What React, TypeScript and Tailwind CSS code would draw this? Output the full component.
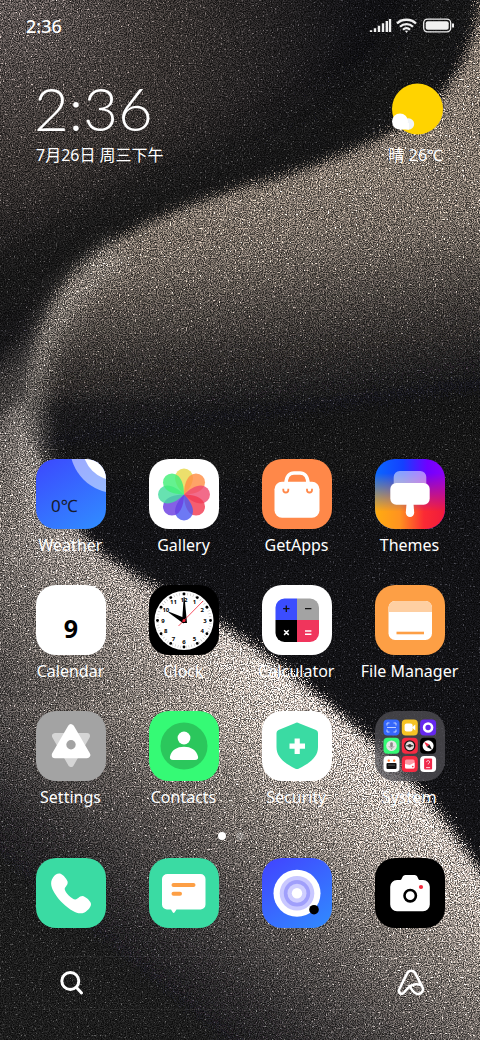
import type { ReactNode } from "react";

interface AppItem {
  name: string;
  icon: ReactNode;
}

function Wallpaper() {
  return (
    <svg
      aria-hidden="true"
      className="absolute inset-0 h-full w-full"
      viewBox="0 0 480 1040"
      preserveAspectRatio="xMidYMid slice"
    >
      <defs>
        <filter id="sand" x="0" y="0" width="480" height="1040" filterUnits="userSpaceOnUse" colorInterpolationFilters="sRGB">
          <feTurbulence type="fractalNoise" baseFrequency="0.87" numOctaves="2" seed="7" result="noise" />
          <feDisplacementMap in="SourceGraphic" in2="noise" scale="38" xChannelSelector="R" yChannelSelector="G" result="scattered" />
          <feColorMatrix in="noise" type="matrix" values="0 0 2.6 0 -0.8  0 0 2.6 0 -0.8  0 0 2.6 0 -0.8  0 0 0 0 1" result="grain" />
          <feComposite in="scattered" in2="grain" operator="arithmetic" k1="1.15" k2="0.42" k3="0" k4="0" result="sand" />
          <feTurbulence type="fractalNoise" baseFrequency="0.57" numOctaves="1" seed="21" result="coarse" />
          <feColorMatrix in="coarse" type="matrix" values="9 0 0 0 -5.8  9 0 0 0 -5.8  9 0 0 0 -5.8  0 0 0 0 1" result="sparks" />
          <feComposite in="scattered" in2="sparks" operator="arithmetic" k1="1.3" k2="0" k3="0.12" k4="0" result="glints" />
          <feComposite in="sand" in2="glints" operator="arithmetic" k1="0" k2="1" k3="1" k4="0" />
        </filter>
        <filter id="soft" x="-40%" y="-40%" width="180%" height="180%">
          <feGaussianBlur stdDeviation="18" />
        </filter>
        <filter id="rim" x="-60%" y="-20%" width="220%" height="140%">
          <feGaussianBlur stdDeviation="9" />
        </filter>
        <filter id="edge" x="-10%" y="-10%" width="120%" height="120%">
          <feGaussianBlur stdDeviation="3" />
        </filter>
        <radialGradient id="haze" gradientUnits="userSpaceOnUse" cx="10" cy="0" r="350">
          <stop offset="0" stopColor="#5e5654" />
          <stop offset="0.45" stopColor="#383331" />
          <stop offset="1" stopColor="#121215" />
        </radialGradient>
        <linearGradient id="upper" gradientUnits="userSpaceOnUse" x1="210" y1="190" x2="245" y2="450">
          <stop offset="0" stopColor="#82776d" />
          <stop offset="0.25" stopColor="#6f665e" />
          <stop offset="0.6" stopColor="#373331" />
          <stop offset="0.85" stopColor="#19191b" />
          <stop offset="1" stopColor="#121215" />
        </linearGradient>
        <linearGradient id="lower" gradientUnits="userSpaceOnUse" x1="310" y1="690" x2="105" y2="940">
          <stop offset="0" stopColor="#dccfc7" />
          <stop offset="0.15" stopColor="#b9aea6" />
          <stop offset="0.38" stopColor="#827a74" />
          <stop offset="0.62" stopColor="#544f4d" />
          <stop offset="0.85" stopColor="#2f2d2e" />
          <stop offset="1" stopColor="#1d1c1f" />
        </linearGradient>
        <linearGradient id="shade" gradientUnits="userSpaceOnUse" x1="0" y1="400" x2="260" y2="700">
          <stop offset="0" stopColor="#121215" stopOpacity="0.7" />
          <stop offset="0.25" stopColor="#121215" stopOpacity="0.3" />
          <stop offset="0.7" stopColor="#121215" stopOpacity="0.12" />
          <stop offset="1" stopColor="#121215" stopOpacity="0" />
        </linearGradient>
      </defs>
      <g filter="url(#sand)">
        <rect x="-40" y="-40" width="560" height="1120" fill="#121215" />
        <rect x="-40" y="-40" width="560" height="500" fill="url(#haze)" />
        <path d="M-40 310L180 190L300 150L400 90L470 -20" fill="none" stroke="#121215" strokeWidth="70" opacity="0.85" filter="url(#soft)" />
        <path
          d="M482 -20C478 40 460 78 428 108C385 140 325 164 270 180C200 198 122 228 82 266C50 296 34 340 30 380C28 410 30 440 40 480H560V-20Z"
          fill="url(#upper)"
          filter="url(#edge)"
        />
        <path
          d="M-40 450L24 400C32 460 60 520 110 560C160 592 210 616 262 652C320 698 390 750 440 815C465 848 485 880 520 920V1080H-40Z"
          fill="url(#lower)"
          filter="url(#edge)"
        />
        <rect x="-40" y="400" width="560" height="300" fill="url(#shade)" />
        <path d="M-20 400C0 370 10 350 20 330V540H-20Z" fill="#6d6661" opacity="0.5" filter="url(#rim)" />
        <path d="M120 250C75 285 48 320 36 370C26 420 28 460 50 500" fill="none" stroke="#938b84" strokeWidth="24" opacity="0.65" filter="url(#rim)" />
      </g>
    </svg>
  );
}

function Icon({ children, bg }: { children?: ReactNode; bg: string }) {
  return (
    <svg viewBox="0 0 70 70" className="block size-[70px]" aria-hidden="true">
      <rect width="70" height="70" rx="20" fill={bg} />
      {children}
    </svg>
  );
}

const PETALS = ["#e8d84c", "#ff8f45", "#ef4b70", "#f23a50", "#4d5cf2", "#6a3de0", "#45dca0", "#42ef78"];

const CLOCK_NUMBERS = [12, 1, 2, 3, 4, 5, 6, 7, 8, 9, 10, 11];

function WeatherIcon() {
  return (
    <Icon bg="url(#weatherBg)">
      <defs>
        <linearGradient id="weatherBg" x1="0.2" y1="0" x2="0.8" y2="1">
          <stop offset="0" stopColor="#3b4dfe" />
          <stop offset="1" stopColor="#3189ff" />
        </linearGradient>
        <clipPath id="tile">
          <rect width="70" height="70" rx="20" />
        </clipPath>
      </defs>
      <g clipPath="url(#tile)" fill="#fff">
        <circle cx="80" cy="-12" r="46" opacity="0.5" />
        <circle cx="80" cy="-12" r="33.5" />
      </g>
      <text x="15" y="53" fontSize="17" fill="#171b2c">0℃</text>
    </Icon>
  );
}

function GalleryIcon() {
  return (
    <Icon bg="#fff">
      <g transform="translate(35 35.5)">
        {PETALS.map((color, i) => (
          <path
            key={color}
            d="M0 0C-5 -5 -9 -11 -9 -17A9 9 0 0 1 9 -17C9 -11 5 -5 0 0Z"
            fill={color}
            opacity="0.82"
            transform={`rotate(${i * 45})`}
          />
        ))}
      </g>
    </Icon>
  );
}

function GetAppsIcon() {
  return (
    <Icon bg="#ff8849">
      <rect x="12.500" y="22.700" width="45" height="36" rx="7.500" fill="#fff" />
      <path d="M24 25C24 17 28 14 32 14H38C42 14 46 17 46 25" fill="none" stroke="#fff" strokeWidth="3.600" />
      <path d="M21.300 29.800V31A2.500 2.500 0 0 0 26.300 31V29.800M45 29.800V31A2.500 2.500 0 0 0 50 31V29.800" fill="none" stroke="#ff8849" strokeWidth="1.800" />
    </Icon>
  );
}

function ThemesIcon() {
  return (
    <Icon bg="url(#themeTop)">
      <defs>
        <linearGradient id="themeTop">
          <stop offset="0" stopColor="#0a68ff" />
          <stop offset="0.4" stopColor="#1440ff" />
          <stop offset="0.75" stopColor="#7000ff" />
          <stop offset="1" stopColor="#8a00f8" />
        </linearGradient>
        <linearGradient id="themeBottom">
          <stop offset="0" stopColor="#ffac10" />
          <stop offset="0.35" stopColor="#ff9320" />
          <stop offset="0.7" stopColor="#fb2a34" />
          <stop offset="1" stopColor="#f01a3c" />
        </linearGradient>
        <linearGradient id="themeFade" x1="0" y1="0" x2="0" y2="1">
          <stop offset="0.2" stopColor="#000" />
          <stop offset="0.75" stopColor="#fff" />
        </linearGradient>
        <mask id="themeMask">
          <rect width="70" height="70" fill="url(#themeFade)" />
        </mask>
      </defs>
      <rect width="70" height="70" rx="20" fill="url(#themeBottom)" mask="url(#themeMask)" />
      <path d="M18.700 25V18A6 6 0 0 1 24.700 12H45.300A6 6 0 0 1 51.300 18V25Z" fill="#fff" opacity="0.5" />
      <rect x="15.300" y="24" width="39.400" height="21.700" rx="6" fill="#fff" />
      <path d="M31.500 45H38.500L39.200 53.500A4.200 4.500 0 0 1 30.800 53.500Z" fill="#fff" />
    </Icon>
  );
}

function CalendarIcon() {
  return (
    <Icon bg="#fff">
      <text x="35" y="53" fontSize="25" fontWeight="700" textAnchor="middle" fill="#000">9</text>
    </Icon>
  );
}

function ClockIcon() {
  return (
    <Icon bg="#000">
      <circle cx="35" cy="35.500" r="29.500" fill="#fff" />
      <circle cx="35" cy="35.500" r="26.500" fill="none" stroke="#b5b5b5" strokeWidth="2.600" strokeDasharray="0.500 2.275" />
      {CLOCK_NUMBERS.map((n, i) => {
        const a = (i * Math.PI) / 6;
        return (
          <g key={n}>
            <circle cx={35 + 26.5 * Math.sin(a)} cy={35.5 - 26.5 * Math.cos(a)} r="1.400" />
            <text
              x={35 + 21 * Math.sin(a)}
              y={37.6 - 21 * Math.cos(a)}
              fontSize="6"
              fontWeight="700"
              textAnchor="middle"
            >
              {n}
            </text>
          </g>
        );
      })}
      <path d="M33 38L34.700 12H35.500L38 38Z" />
      <path d="M37 33.500L34.500 38.500L19.500 27.500L20 26.800Z" />
      <path d="M29.500 41L54 16" stroke="#f5283c" strokeWidth="0.800" />
      <circle cx="35" cy="35.500" r="1.500" fill="#f5283c" />
    </Icon>
  );
}

function CalculatorIcon() {
  return (
    <Icon bg="#fff">
      <path d="M35 13.500V35H13.500V22.500A9 9 0 0 1 22.500 13.500Z" fill="#3b4dfe" />
      <path d="M35 13.500V35H57V22.500A9 9 0 0 0 48 13.500Z" fill="#a3a3a3" />
      <path d="M35 57V35H13.500V48A9 9 0 0 0 22.500 57Z" fill="#000" />
      <path d="M35 57V35H57V48A9 9 0 0 1 48 57Z" fill="#f0355c" />
      <path d="M24.300 20.500V26.900M21.100 23.700H27.500M43 23.700H49.400" stroke="#111" strokeWidth="1.300" />
      <path d="M22.100 45.300L26.700 49.900M26.700 45.300L22.100 49.900M43 46H49.400M43 49.300H49.400" stroke="#fff" strokeWidth="1.500" />
    </Icon>
  );
}

function FilesIcon() {
  return (
    <Icon bg="#fd9f45">
      <rect x="13.500" y="16" width="43.500" height="39" rx="6.500" fill="#fff" />
      <path d="M13.500 27V22.500A6.500 6.500 0 0 1 20 16H50.500A6.500 6.500 0 0 1 57 22.500V27Z" fill="#fecfa2" />
      <path d="M21.500 48H49" stroke="#fd9f45" strokeWidth="2.600" />
    </Icon>
  );
}

function SettingsIcon() {
  return (
    <Icon bg="#a3a3a3">
      <path d="M19 25H51L35 53Z" fill="#fff" stroke="#fff" strokeWidth="6" strokeLinejoin="round" opacity="0.55" />
      <path d="M35 16.500L51 44H19Z" fill="#fff" stroke="#fff" strokeWidth="6.500" strokeLinejoin="round" />
      <circle cx="35" cy="33.700" r="4.700" fill="#a3a3a3" />
    </Icon>
  );
}

function ContactsIcon() {
  return (
    <Icon bg="#35fa75">
      <circle cx="35" cy="35" r="23.500" fill="#2bc75c" />
      <circle cx="35" cy="27" r="6.400" fill="#fff" />
      <path d="M24 49C21.500 49 20.500 47.500 21 45.500C22.500 39 28 35.700 35 35.700S47.500 39 49 45.500C49.500 47.500 48.500 49 46 49Z" fill="#fff" />
    </Icon>
  );
}

function SecurityIcon() {
  return (
    <Icon bg="#fff">
      <path d="M33 12.200Q35 11 37 12.200L54 19Q56 20 56 22V36C56 46 48 52 37 57.500Q35 58.500 33 57.500C22 52 14.500 46 14.500 36V22Q14.500 20 16.500 19Z" fill="#3adba3" />
      <path d="M35.200 27.500V43M27.500 35.200H43" stroke="#fff" strokeWidth="5.200" />
    </Icon>
  );
}

function FolderIcon() {
  return (
    <Icon bg="rgba(82,80,86,0.75)">
      <g transform="translate(8.500 8.500)">
        <rect width="16" height="16" rx="4" fill="#3567fb" />
        <path d="M3.500 6V3.500H6M10 3.500H12.500V6M12.500 10V12.500H10M6 12.500H3.500V10M3.500 8H12.500" fill="none" stroke="#cfdcff" strokeWidth="0.900" />
      </g>
      <g transform="translate(26.800 8.500)">
        <rect width="16" height="16" rx="4" fill="#f6c324" />
        <rect x="2.800" y="4" width="8" height="8" rx="2" fill="#fff" />
        <path d="M10 8L13.500 5V11Z" fill="#fff" />
      </g>
      <g transform="translate(45.100 8.500)">
        <rect width="16" height="16" rx="4" fill="#6528ee" />
        <circle cx="8" cy="8" r="4" fill="none" stroke="#fff" strokeWidth="2.600" />
      </g>
      <g transform="translate(8.500 26.800)">
        <rect width="16" height="16" rx="4" fill="#35fa75" />
        <circle cx="8" cy="8" r="5.300" fill="#e6e6e6" />
        <rect x="6.700" y="4.500" width="2.600" height="5" rx="1.300" fill="#888" />
        <path d="M5.500 8.300C6 11 10 11 10.500 8.300M8 10.300V12" fill="none" stroke="#888" strokeWidth="0.700" />
      </g>
      <g transform="translate(26.800 26.800)">
        <rect width="16" height="16" rx="4" fill="#f62b42" />
        <circle cx="8" cy="8" r="5" fill="#e8e0e0" stroke="#151515" strokeWidth="1.300" />
        <path d="M4.500 8H11.500" stroke="#222" strokeWidth="1" />
        <circle cx="8" cy="8" r="1.800" fill="#333" />
      </g>
      <g transform="translate(45.100 26.800)">
        <rect width="16" height="16" rx="4" fill="#000" />
        <circle cx="8" cy="8" r="5.500" fill="#fff" />
        <path d="M4 4L9.300 6.800L6.800 9.300Z" fill="#f62b42" />
        <path d="M12 12L9.300 6.800L6.800 9.300Z" fill="#111" />
      </g>
      <g transform="translate(8.500 45.100)">
        <rect width="16" height="16" rx="4" fill="#fff" />
        <circle cx="5.300" cy="4.500" r="1.200" fill="#ff7a33" />
        <circle cx="10.700" cy="4.500" r="1.200" fill="#ff7a33" />
        <rect x="3" y="7" width="10" height="6" rx="1" fill="#111" />
        <path d="M4.500 9H11.500" stroke="#777" strokeWidth="0.700" />
      </g>
      <g transform="translate(26.800 45.100)">
        <rect width="16" height="16" rx="4" fill="#f62b42" />
        <rect x="3.200" y="3.500" width="9.600" height="9" rx="1.500" fill="#ff9aa6" />
        <path d="M3.200 8L8 9L12.800 6.500V11A1.500 1.500 0 0 1 11.300 12.500H4.700A1.500 1.500 0 0 1 3.200 11Z" fill="#fff" />
        <circle cx="11" cy="10.500" r="0.800" fill="#f62b42" />
      </g>
      <g transform="translate(45.100 45.100)">
        <rect width="16" height="16" rx="4" fill="#fff" />
        <rect x="4" y="2.500" width="8" height="11" rx="1" fill="#f0284a" />
        <path d="M6.500 6C6.500 4 9.500 4 9.500 6C9.500 7.200 8 7 8 8.300M6 11.500H10" fill="none" stroke="#fff" strokeWidth="0.800" />
      </g>
    </Icon>
  );
}

function PhoneIcon() {
  return (
    <Icon bg="#3adba3">
      <path
        d="M17 19.500C19 16.500 21.500 15 24 15.500C27 16.500 30 20 31.500 23.300C32.500 27 29 28.500 28.700 31C28.700 34 36 41.500 39.300 41.500C42 41.300 43 38 46.500 38C49.500 38.500 53.500 42 54.800 45C56 48 52 52.500 48.500 54.500C45 56 41 55.500 37 53C30 49 23 42.500 18.500 35C15.500 30 13.500 24.500 17 19.500Z"
        fill="#fff"
      />
    </Icon>
  );
}

function MessagesIcon() {
  return (
    <Icon bg="#3adba3">
      <path d="M18.500 16H51.500A5 5 0 0 1 56.500 21V46.500A5 5 0 0 1 51.500 51.500H27.500L25.500 54.500Q24.500 55.500 23.700 54.300L22 51.500H18A5 5 0 0 1 13 46.500V21A5.500 5 0 0 1 18.500 16Z" fill="#fff" />
      <path d="M24.500 27H44.500M24.500 35.700H31" stroke="#fd9f45" strokeWidth="4" strokeLinecap="round" />
    </Icon>
  );
}

function BrowserIcon() {
  return (
    <Icon bg="url(#browserBg)">
      <defs>
        <linearGradient id="browserBg" x1="0.2" y1="0" x2="0.9" y2="1">
          <stop offset="0" stopColor="#4048ff" />
          <stop offset="1" stopColor="#3189ff" />
        </linearGradient>
      </defs>
      <circle cx="35" cy="35.300" r="23.500" fill="#fff" />
      <circle cx="35" cy="35.300" r="17.300" fill="#c9c8ff" />
      <circle cx="35" cy="35.300" r="13.200" fill="#a09ffb" />
      <circle cx="35" cy="35.300" r="9.500" fill="#cfceff" />
      <circle cx="35" cy="35.300" r="5.200" fill="#fff" />
      <circle cx="52" cy="51.700" r="4.800" fill="#000" />
    </Icon>
  );
}

function CameraIcon() {
  return (
    <Icon bg="#000">
      <path d="M22 22H25.500C27 22 27 17 30.500 17H39.500C43 17 43 22 44.500 22H48A6.800 6.800 0 0 1 54.800 28.800V46.500A6.800 6.800 0 0 1 48 53.300H22A6.800 6.800 0 0 1 15.200 46.500V28.800A6.800 6.800 0 0 1 22 22Z" fill="#fff" />
      <circle cx="35.200" cy="37.700" r="5.700" fill="none" stroke="#000" strokeWidth="2.600" />
      <circle cx="46" cy="29" r="2.100" fill="#f5283c" />
    </Icon>
  );
}

const APPS: AppItem[] = [
  { name: "Weather", icon: <WeatherIcon /> },
  { name: "Gallery", icon: <GalleryIcon /> },
  { name: "GetApps", icon: <GetAppsIcon /> },
  { name: "Themes", icon: <ThemesIcon /> },
  { name: "Calendar", icon: <CalendarIcon /> },
  { name: "Clock", icon: <ClockIcon /> },
  { name: "Calculator", icon: <CalculatorIcon /> },
  { name: "File Manager", icon: <FilesIcon /> },
  { name: "Settings", icon: <SettingsIcon /> },
  { name: "Contacts", icon: <ContactsIcon /> },
  { name: "Security", icon: <SecurityIcon /> },
  { name: "System", icon: <FolderIcon /> },
];

const DOCK: AppItem[] = [
  { name: "Phone", icon: <PhoneIcon /> },
  { name: "Messages", icon: <MessagesIcon /> },
  { name: "Browser", icon: <BrowserIcon /> },
  { name: "Camera", icon: <CameraIcon /> },
];

function StatusBar() {
  return (
    <header className="flex items-center justify-between px-[26px] pt-[14px]">
      <time className="text-lg leading-6 font-medium">2:36</time>
      <svg width="86" height="16" viewBox="0 0 86 16" fill="none" aria-hidden="true">
        <path d="M3 14V12.200M7 14V10.300M11 14V7.800M15 14V5.200M18.800 14V3M22 14V1" stroke="#f0f0f0" strokeWidth="2.400" />
        <path d="M29 5.500C34 0.500 43 0.500 48 5.500M32 8.700C35.500 5.200 41.500 5.200 45 8.700M35 11.700C37 9.700 40 9.700 42 11.700" stroke="#f0f0f0" strokeWidth="2.300" />
        <path d="M36.800 12.700H40.200L38.500 15Z" fill="#f0f0f0" />
        <rect x="55.700" y="1.200" width="27" height="12.600" rx="3.800" stroke="#f0f0f0" strokeWidth="1.300" />
        <rect x="57.700" y="3.200" width="23" height="8.600" rx="2" fill="#f0f0f0" />
        <path d="M85 5.500V9.500" stroke="#f0f0f0" strokeWidth="2" />
      </svg>
    </header>
  );
}

function ClockWidget() {
  return (
    <section className="mt-[34px] flex items-end justify-between pr-[37px] pl-[34px]">
      <div>
        <p className="font-[Lato,sans-serif] text-[60px] leading-[72px] font-light">2:36</p>
        <p className="mt-[1px] pl-[2px] text-base leading-5">7月26日 周三下午</p>
      </div>
      <div className="flex flex-col items-end">
        <svg width="52" height="52" viewBox="0 0 52 52" aria-hidden="true">
          <circle cx="26.500" cy="26" r="25.500" fill="#ffd300" />
          <circle cx="17.500" cy="41" r="5.700" fill="#f1f4f8" />
          <circle cx="9" cy="38.500" r="8" fill="#fff" />
          <path d="M9 40H18V46.500H9Z" fill="#fff" />
        </svg>
        <p className="mt-[10px] text-base leading-5">晴 26℃</p>
      </div>
    </section>
  );
}

function SearchBar() {
  return (
    <form className="mx-[39px] mt-7 flex h-[54px] items-center rounded-full border border-white/5 pr-[15px] pl-[18px]">
      <button type="submit" aria-label="Search" className="p-[2px]">
        <svg width="24" height="24" viewBox="0 0 24 24" fill="none" stroke="#fff" strokeWidth="3" strokeLinecap="round" aria-hidden="true">
          <circle cx="10.300" cy="10" r="8.500" />
          <path d="M16.500 16.500L21.500 22" />
        </svg>
      </button>
      <input type="search" aria-label="Search" className="min-w-0 flex-1 bg-transparent outline-none" />
      <button type="button" aria-label="Assistant">
        <svg width="28" height="28" viewBox="0 0 28 28" fill="none" stroke="#fff" strokeWidth="2.600" strokeLinecap="round" strokeLinejoin="round" aria-hidden="true">
          <path d="M12.500 16.800C14.500 20.500 17 25 21 25C25 25 27 21 25.300 17.800L18.200 4.200C16.500 1 12 1 10.300 4.200L2.400 20C0.800 23 3.300 25.800 6 24.400C9 22.500 11 15.500 19 15.200C22 15.100 24.500 16 25.300 17.800" />
        </svg>
      </button>
    </form>
  );
}

export default function App() {
  return (
    <div className="relative min-h-screen overflow-hidden bg-[#121215] font-['Noto_Sans','Noto_Sans_CJK_SC',sans-serif] text-white">
      <Wallpaper />
      <div className="relative flex min-h-screen flex-col pb-[30px]">
        <StatusBar />
        <ClockWidget />
        <main className="mt-auto grid grid-cols-4 gap-y-7 px-[14px]">
          {APPS.map((app) => (
            <button key={app.name} type="button" className="flex flex-col items-center gap-1">
              {app.icon}
              <span className="text-base leading-6 whitespace-nowrap">{app.name}</span>
            </button>
          ))}
        </main>
        <div className="mt-[23px] flex justify-center gap-[10px]">
          <span className="size-2 rounded-full bg-white" />
          <span className="size-2 rounded-full bg-white/25" />
          <span className="size-2 rounded-full bg-white/0" />
        </div>
        <nav className="mt-[18px] grid grid-cols-4 px-[14px]">
          {DOCK.map((app) => (
            <button key={app.name} type="button" aria-label={app.name} className="flex justify-center">
              {app.icon}
            </button>
          ))}
        </nav>
        <SearchBar />
      </div>
    </div>
  );
}
